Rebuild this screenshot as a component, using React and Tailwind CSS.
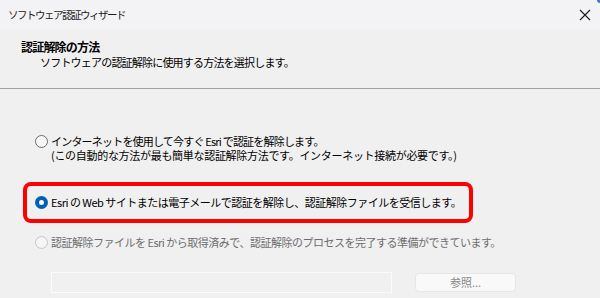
import React from "react";

const font = { fontFamily: '"Noto Sans CJK JP", "Noto Sans", sans-serif' };

function Radio({ state }) {
  if (state === "checked") {
    return (
      <span className="flex h-[13px] w-[13px] shrink-0 items-center justify-center rounded-full bg-[#005fb8]">
        <span className="h-[5px] w-[5px] rounded-full bg-white" />
      </span>
    );
  }
  if (state === "disabled") {
    return <span className="block h-[13px] w-[13px] shrink-0 rounded-full border border-[#c6c6c6] bg-[#f5f5f5]" />;
  }
  return <span className="block h-[13px] w-[13px] shrink-0 rounded-full border border-[#6e6e6e] bg-[#f7f7f7]" />;
}

export default function App() {
  return (
    <div
      className="relative flex h-[298px] w-[600px] flex-col overflow-hidden bg-[#f0f0f0] text-black"
      style={font}
    >
      {/* title bar */}
      <div className="flex h-[30px] items-center justify-between bg-[#f3f2f5] pl-[8px] pr-[9px]">
        <span className="text-[10.5px] tracking-[-1.5px] text-[#1a1a1a]">ソフトウェア認証ウィザード</span>
        <svg width="12" height="12" viewBox="0 0 12 12" className="mb-[1px]">
          <path d="M1 1 L11 11 M11 1 L1 11" stroke="#1a1a1a" strokeWidth="1.1" />
        </svg>
      </div>
      <div className="absolute right-0 top-0 h-[3px] w-[3px] rounded-bl-full bg-[#3a7bd5]" />

      {/* header */}
      <div className="flex h-[58px] flex-col pl-[21px] pt-[10px]">
        <span className="text-[12px] font-bold leading-[14px] tracking-[-0.8px]">認証解除の方法</span>
        <span className="mt-[1px] pl-[19px] text-[11px] leading-[14px] tracking-[-0.8px]">
          ソフトウェアの認証解除に使用する方法を選択します。
        </span>
      </div>
      <div className="h-px bg-[#a0a0a0]" />

      {/* body */}
      <div className="flex flex-col pl-[23px] text-[11px]">
        <div className="mt-[45px] flex items-start gap-[3px] pl-[12px]">
          <span className="mt-[1px] shrink-0">
            <Radio />
          </span>
          <div className="flex flex-col leading-[14px]">
            <span className="tracking-[-0.8px]">インターネットを使用して今すぐ Esri で認証を解除します。</span>
            <span className="tracking-[-0.3px]">(この自動的な方法が最も簡単な認証解除方法です。インターネット接続が必要です。)</span>
          </div>
        </div>

        <div className="mt-[20px] flex h-[41px] w-[450px] items-center gap-[3px] rounded-[8px] border-4 border-[#ff0000] pl-[8px]">
          <Radio state="checked" />
          <span className="leading-[13px] tracking-[-0.5px]">Esri の Web サイトまたは電子メールで認証を解除し、認証解除ファイルを受信します。</span>
        </div>

        <div className="mt-[13px] flex items-center gap-[3px] pl-[12px] text-[#6d6d6d]">
          <Radio state="disabled" />
          <span className="leading-[13px] tracking-[-0.5px]">認証解除ファイルを Esri から取得済みで、認証解除のプロセスを完了する準備ができています。</span>
        </div>

        <div className="mt-[23px] flex items-start pl-[28px]">
          <div className="h-[21px] w-[341px] border border-[#fbfbfb] bg-[#f0f0f0]" />
          <div className="ml-[23px] mt-[1px] flex h-[19px] w-[101px] items-center justify-center rounded-[4px] border border-[#e6e6e6] bg-[#f9f9f9] text-[#8a8a8a]">
            参照...
          </div>
        </div>
      </div>
    </div>
  );
}
